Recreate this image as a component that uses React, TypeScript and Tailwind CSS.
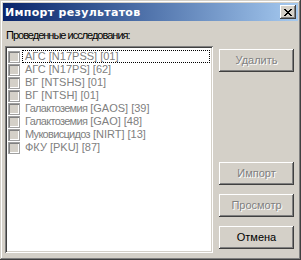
import React from 'react';

const items = [
  'АГС [N17PSS] [01]',
  'АГС [N17PS] [62]',
  'ВГ [NTSHS] [01]',
  'ВГ [NTSH] [01]',
  'Галактоземия [GAOS] [39]',
  'Галактоземия [GAO] [48]',
  'Муковисцидоз [NIRT] [13]',
  'ФКУ [PKU] [87]',
];

const raised =
  'shadow-[inset_-1px_-1px_#404040,inset_1px_1px_#ffffff,inset_-2px_-2px_#808080,inset_2px_2px_#d4d0c8]';

// длинные кириллические слова в оригинале уже, чем в Arial
function ItemText({ text }: { text: string }) {
  const idx = text.indexOf(' [');
  const name = text.slice(0, idx);
  const rest = text.slice(idx);
  return (
    <>
      <span className={name.length > 3 ? 'tracking-[-0.7px]' : ''}>{name}</span>
      {rest}
    </>
  );
}

function Button({ label, disabled }: { label: string; disabled?: boolean }) {
  return (
    <div
      className={`h-[23px] w-[75px] bg-[#d4d0c8] flex items-center justify-center text-[11px] ${raised} ${
        disabled ? 'text-[#808080] [text-shadow:1px_1px_0_#ffffff]' : 'text-black'
      }`}
    >
      {label}
    </div>
  );
}

export default function App() {
  return (
    <div
      className="w-[301px] h-[260px] bg-[#d4d0c8] p-[3px] flex flex-col shadow-[inset_-1px_-1px_#404040,inset_1px_1px_#d4d0c8,inset_-2px_-2px_#808080,inset_2px_2px_#ffffff]"
      style={{ fontFamily: '"Liberation Sans", Arial, sans-serif' }}
    >
      {/* заголовок */}
      <div className="h-[18px] bg-linear-to-r from-[#0a246a] to-[#a6caf0] flex items-center pl-[2px] pr-[2px]">
        <span
          className="text-white font-bold text-[11px] tracking-[0.3px] flex-1 leading-none"
          style={{ fontFamily: '"DejaVu Sans", sans-serif' }}
        >
          Импорт результатов
        </span>
        <div className={`w-[16px] h-[14px] bg-[#d4d0c8] flex items-center justify-center ${raised}`}>
          <svg width="8" height="7" viewBox="0 0 8 7">
            <path d="M0 0h2v1h1v1h2v-1h1v-1h2v1h-1v1h-1v1h-1v1h1v1h1v1h1v1h-2v-1h-1v-1h-2v1h-1v1h-2v-1h1v-1h1v-1h1v-1h-1v-1h-1v-1h-1z" fill="#000" />
          </svg>
        </div>
      </div>

      {/* содержимое */}
      <div className="flex-1 flex pl-[2px] pr-[4px] min-h-0">
        <div className="w-[208px] flex flex-col pt-[8px] pb-[4px]">
          <div className="h-[13px] text-[11px] leading-[13px] text-black pl-[1px] tracking-[-1px]">
            Проведенные исследования:
          </div>
          <div className="mt-[4px] flex-1 bg-white pt-[4px] px-[3px] shadow-[inset_1px_1px_#808080,inset_-1px_-1px_#ffffff,inset_2px_2px_#404040,inset_-2px_-2px_#d4d0c8]">
            {items.map((item, i) => (
              <div key={item} className="h-[13px] flex items-center">
                <div className="w-[12px] h-[12px] bg-[#d4d0c8] shadow-[inset_1px_1px_#808080,inset_-1px_-1px_#ffffff] border border-[#a0a0a0] shrink-0" />
                <div
                  className={`ml-[2px] flex-1 h-[13px] pl-[2px] text-[11px] leading-[11px] text-[#808080] ${
                    i === 0 ? 'border border-dotted border-black' : 'border border-transparent'
                  }`}
                >
                  <ItemText text={item} />
                </div>
              </div>
            ))}
          </div>
        </div>

        <div className="ml-[6px] w-[75px] flex flex-col pt-[28px] pb-[8px]">
          <Button label="Удалить" disabled />
          <div className="flex-1" />
          <Button label="Импорт" disabled />
          <div className="h-[9px]" />
          <Button label="Просмотр" disabled />
          <div className="h-[9px]" />
          <Button label="Отмена" />
        </div>
      </div>
    </div>
  );
}
